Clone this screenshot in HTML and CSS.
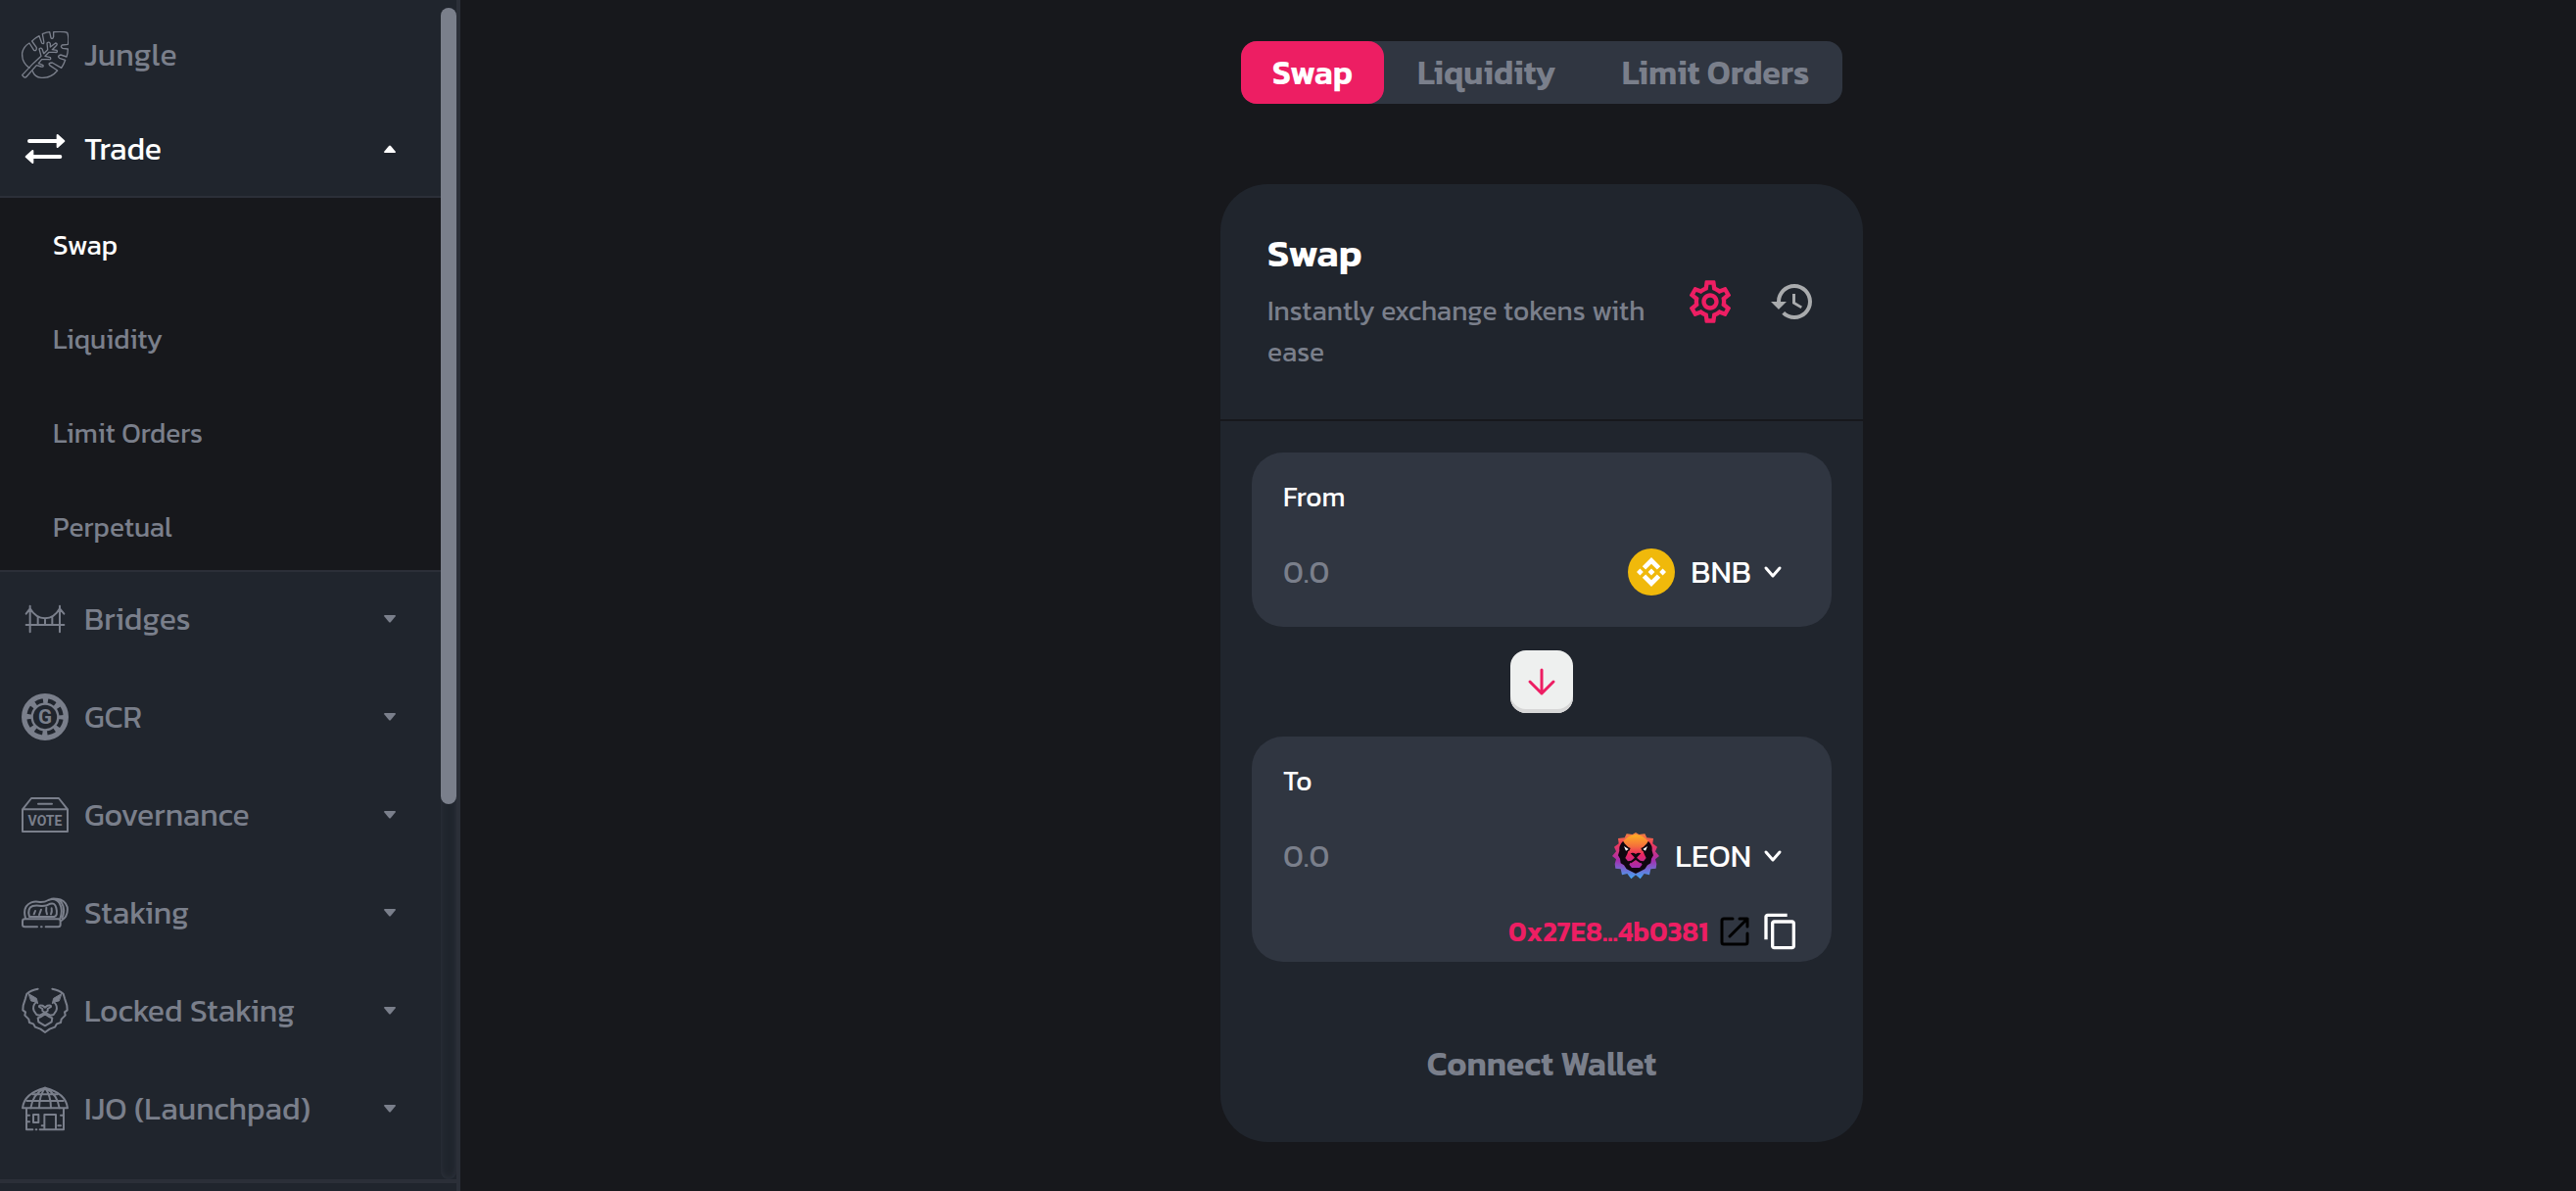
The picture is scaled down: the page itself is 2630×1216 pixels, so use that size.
FILE: index.html
```
<!DOCTYPE html>
<html lang="en">
<head>
  <meta charset="UTF-8">
  <meta name="viewport" content="width=device-width, initial-scale=1">
  <title>Swap</title>
  <link rel="stylesheet" href="styles.css">
</head>
<body>

<aside class="sidebar">
  <div class="sidebar-scroll">
    <nav class="menu">
      <a class="menu-item" href="#">
        <svg class="menu-icon thin" viewBox="0 0 144 144">
          <path d="M24 112Q0 96 2 66Q6 46 24 36L38 58Q46 62 46 50L32 30Q42 20 54 14L62 36Q70 42 68 30L64 8Q78 2 86 2L90 20Q96 26 98 16L98 2Q130 0 140 4Q146 20 142 40L124 42Q118 48 126 52L142 54Q142 66 138 78L120 72Q108 76 116 82L134 88Q130 100 122 112L94 96Q80 96 86 104L110 120Q90 144 60 142Q40 140 34 122"/>
          <path d="M36 98L60 76L54 54Q60 48 64 56L68 68L80 56L78 36Q84 30 88 38L88 48L104 36Q112 38 106 44L94 56L108 58Q112 66 102 64L84 64L72 76L88 80Q92 88 82 86L62 86L52 98L66 104Q68 110 60 108L46 104L16 138Q10 146 2 134Z"/>
        </svg>
        <span>Jungle</span>
      </a>
      <button class="menu-item active" type="button" aria-expanded="true">
        <svg class="menu-icon" viewBox="0 0 144 144">
          <path d="M24 48H110M118 96H34" stroke-width="12"/>
          <path class="solid" d="M110 30L130 48L110 66ZM34 78L14 96L34 114Z"/>
        </svg>
        <span>Trade</span>
        <svg class="caret up" viewBox="0 0 12 8"><path d="M0 1Q0 0 1 0H11Q12 0 12 1L7 7Q6 8 5 7Z"/></svg>
      </button>
      <div class="submenu">
        <a class="active" href="#">Swap</a>
        <a href="#">Liquidity</a>
        <a href="#">Limit Orders</a>
        <a href="#">Perpetual</a>
      </div>
      <div class="menu-group">
        <button class="menu-item" type="button">
          <svg class="menu-icon" viewBox="0 0 144 144">
            <path d="M26 32V112M117 32V112M14 90H130M14 56L26 40Q44 70 72 70Q100 70 117 40L130 56M50 66V90M72 70V90M94 66V90"/>
          </svg>
          <span>Bridges</span>
          <svg class="caret" viewBox="0 0 12 8"><path d="M0 1Q0 0 1 0H11Q12 0 12 1L7 7Q6 8 5 7Z"/></svg>
        </button>
        <button class="menu-item" type="button">
          <svg class="menu-icon" viewBox="0 0 144 144">
            <circle cx="72" cy="72" r="64" stroke-width="16"/>
            <circle cx="72" cy="72" r="40" stroke-width="7"/>
            <circle cx="72" cy="72" r="49" stroke-width="18" stroke-dasharray="15 23.48" stroke-dashoffset="7.5" stroke-linecap="butt"/>
            <text x="72" y="94" font-size="62">G</text>
          </svg>
          <span>GCR</span>
          <svg class="caret" viewBox="0 0 12 8"><path d="M0 1Q0 0 1 0H11Q12 0 12 1L7 7Q6 8 5 7Z"/></svg>
        </button>
        <button class="menu-item" type="button">
          <svg class="menu-icon" viewBox="0 0 144 144">
            <path d="M3 55L30 21H114L141 55V123H3V55H141M51 38H93"/>
            <text x="72" y="104" font-size="42">VOTE</text>
          </svg>
          <span>Governance</span>
          <svg class="caret" viewBox="0 0 12 8"><path d="M0 1Q0 0 1 0H11Q12 0 12 1L7 7Q6 8 5 7Z"/></svg>
        </button>
        <button class="menu-item" type="button">
          <svg class="menu-icon" viewBox="0 0 144 144">
            <path d="M48 115H10Q3 115 3 108V98Q3 91 10 91H112Q119 91 119 98V108Q119 115 112 115H74M60 115H62"/>
            <path d="M12 88Q2 52 30 40Q42 36 56 39Q70 40 82 33Q104 24 116 42Q128 62 118 90"/>
            <path d="M24 84Q16 58 34 51Q46 48 60 51Q76 52 88 44Q102 40 106 56Q112 80 100 84H24"/>
            <path d="M92 29Q110 26 122 40Q136 62 124 88M108 29Q132 30 140 54Q144 82 122 96"/>
            <path d="M42 66L38 76M60 62L54 78M76 56Q74 66 78 76M92 58Q94 68 90 76"/>
          </svg>
          <span>Staking</span>
          <svg class="caret" viewBox="0 0 12 8"><path d="M0 1Q0 0 1 0H11Q12 0 12 1L7 7Q6 8 5 7Z"/></svg>
        </button>
        <button class="menu-item" type="button">
          <svg class="menu-icon" viewBox="0 0 144 144">
            <path d="M50 5Q30 8 16 20L12 34L5 56L4 70L12 76L10 86L22 98L24 108L36 112L42 122L58 128L72 138L86 128L102 122L108 112L120 108L122 98L134 86L132 76L140 70L139 56L132 34L128 20Q114 8 94 5"/>
            <path class="solid" stroke-width="3" d="M22 20L46 34L50 50L40 44L30 42ZM122 20L98 34L94 50L104 44L114 42Z"/>
            <path d="M44 46Q32 58 38 72L46 84L56 86L72 78L88 86L98 84L106 72Q112 58 100 46"/>
            <path d="M72 62L64 56Q52 54 54 60L64 66V72L72 78L80 72V66L90 60Q92 54 80 56Z"/>
            <path d="M50 94L60 90L72 82L84 90L94 94L92 106L72 118L52 106Z"/>
          </svg>
          <span>Locked Staking</span>
          <svg class="caret" viewBox="0 0 12 8"><path d="M0 1Q0 0 1 0H11Q12 0 12 1L7 7Q6 8 5 7Z"/></svg>
        </button>
        <button class="menu-item" type="button">
          <svg class="menu-icon" viewBox="0 0 144 144">
            <path d="M3 70Q8 24 72 8Q136 24 141 70Z"/>
            <path d="M34 28H110M16 48H128M28 70Q34 28 72 8Q110 28 116 70M54 70Q54 32 72 8Q90 32 90 70"/>
            <path d="M15 72V136H34M44 136H46M56 136H129V72M70 136V90H105V136M36 90H52V114H36ZM16 92H24M16 112H24M120 92H128M120 124H112M62 124H70"/>
          </svg>
          <span>IJO (Launchpad)</span>
          <svg class="caret" viewBox="0 0 12 8"><path d="M0 1Q0 0 1 0H11Q12 0 12 1L7 7Q6 8 5 7Z"/></svg>
        </button>
      </div>
    </nav>
    <div class="scroll-track"><div class="scroll-thumb"></div></div>
  </div>
</aside>

<main class="content">
  <div class="tabs">
    <button class="tab active" type="button">Swap</button>
    <button class="tab" type="button">Liquidity</button>
    <button class="tab" type="button">Limit Orders</button>
  </div>

  <section class="card">
    <header class="card-header">
      <div class="card-heading">
        <h1>Swap</h1>
        <p>Instantly exchange tokens with ease</p>
      </div>
      <div class="card-actions">
        <button class="icon-btn settings" type="button" aria-label="Settings">
          <svg width="52" height="52" viewBox="0 0 24 24"><path d="M19.43 12.98c.04-.32.07-.64.07-.98 0-.34-.03-.66-.07-.98l2.11-1.65c.19-.15.24-.42.12-.64l-2-3.46c-.09-.16-.26-.25-.44-.25-.06 0-.12.01-.17.03l-2.49 1c-.52-.4-1.08-.73-1.69-.98l-.38-2.65C14.46 2.18 14.25 2 14 2h-4c-.25 0-.46.18-.49.42l-.38 2.65c-.61.25-1.17.59-1.69.98l-2.49-1c-.06-.02-.12-.03-.18-.03-.17 0-.34.09-.43.25l-2 3.46c-.13.22-.07.49.12.64l2.11 1.65c-.04.32-.07.65-.07.98 0 .33.03.66.07.98l-2.11 1.65c-.19.15-.24.42-.12.64l2 3.46c.09.16.26.25.44.25.06 0 .12-.01.17-.03l2.49-1c.52.4 1.08.73 1.69.98l.38 2.65c.03.24.24.42.49.42h4c.25 0 .46-.18.49-.42l.38-2.65c.61-.25 1.17-.59 1.69-.98l2.49 1c.06.02.12.03.18.03.17 0 .34-.09.43-.25l2-3.46c.12-.22.07-.49-.12-.64l-2.11-1.65zm-1.98-1.71c.04.31.05.52.05.73 0 .21-.02.43-.05.73l-.14 1.13.89.7 1.08.84-.7 1.21-1.27-.51-1.04-.42-.9.68c-.43.32-.84.56-1.25.73l-1.06.43-.16 1.13-.2 1.35h-1.4l-.19-1.35-.16-1.13-1.06-.43c-.43-.18-.83-.41-1.23-.71l-.91-.7-1.06.43-1.27.51-.7-1.21 1.08-.84.89-.7-.14-1.13c-.03-.31-.05-.54-.05-.74s.02-.43.05-.73l.14-1.13-.89-.7-1.08-.84.7-1.21 1.27.51 1.04.42.9-.68c.43-.32.84-.56 1.25-.73l1.06-.43.16-1.13.2-1.35h1.39l.19 1.35.16 1.13 1.06.43c.43.18.83.41 1.23.71l.91.7 1.06-.43 1.27-.51.7 1.21-1.07.85-.89.7.14 1.13zM12 8c-2.21 0-4 1.79-4 4s1.79 4 4 4 4-1.79 4-4-1.79-4-4-4zm0 6c-1.1 0-2-.9-2-2s.9-2 2-2 2 .9 2 2-.9 2-2 2z"/></svg>
        </button>
        <button class="icon-btn history" type="button" aria-label="History">
          <svg width="48" height="48" viewBox="0 0 24 24"><path d="M13 3c-4.97 0-9 4.03-9 9H1l3.89 3.89.07.14L9 12H6c0-3.87 3.13-7 7-7s7 3.13 7 7-3.13 7-7 7c-1.93 0-3.68-.79-4.94-2.06l-1.42 1.42C8.27 19.99 10.51 21 13 21c4.97 0 9-4.03 9-9s-4.03-9-9-9zm-1 5v5l4.28 2.54.72-1.21-3.5-2.08V8H12z"/></svg>
        </button>
      </div>
    </header>

    <div class="card-body">
      <div class="token-box">
        <label for="from">From</label>
        <div class="token-row">
          <input id="from" type="text" placeholder="0.0">
          <button class="token" type="button">
            <svg width="48" height="48" viewBox="0 0 32 32">
              <circle cx="16" cy="16" r="16" fill="#f0b90b"/>
              <path fill="#fff" d="M12.116 14.404L16 10.52l3.886 3.886 2.26-2.26L16 6l-6.144 6.144 2.26 2.26zM6 16l2.26-2.26L10.52 16l-2.26 2.26L6 16zm6.116 1.596L16 21.48l3.886-3.886 2.26 2.26L16 26l-6.147-6.147 2.263-2.257zM21.48 16l2.26-2.26L26 16l-2.26 2.26L21.48 16zm-3.188 0L16 18.294 13.706 16 16 13.706 18.292 16z"/>
            </svg>
            <span>BNB</span>
            <svg class="chevron" width="24" height="24" viewBox="0 0 24 24"><path d="M5 8l7 8 7-8"/></svg>
          </button>
        </div>
      </div>

      <button class="switch" type="button" aria-label="Switch tokens">
        <svg width="48" height="48" viewBox="0 0 48 48"><path d="M24 12v24M12 24l12 12 12-12"/></svg>
      </button>

      <div class="token-box with-address">
        <label for="to">To</label>
        <div class="token-row">
          <input id="to" type="text" placeholder="0.0">
          <button class="token" type="button">
            <svg width="48" height="48" viewBox="0 0 144 144">
              <defs>
                <linearGradient id="mane" x1="0" y1="0" x2="0" y2="1">
                  <stop offset="0" stop-color="#f58a3c"/>
                  <stop offset=".25" stop-color="#ee3a5c"/>
                  <stop offset=".6" stop-color="#a52fb0"/>
                  <stop offset="1" stop-color="#3fa9f5"/>
                </linearGradient>
                <linearGradient id="face" x1="0" y1="0" x2="0" y2="1">
                  <stop offset="0" stop-color="#fdb022"/>
                  <stop offset=".35" stop-color="#f5703c"/>
                  <stop offset=".6" stop-color="#ec2560"/>
                  <stop offset="1" stop-color="#a02cb4"/>
                </linearGradient>
              </defs>
              <path fill="url(#mane)" d="M72 0L82 6L100 4L106 16L126 18L124 34L138 44L132 58L144 72L132 82L136 96L134 110L118 112L114 130L98 126L86 142L72 130L58 142L46 126L30 130L26 112L10 110L8 96L12 82L0 72L12 58L6 44L20 34L18 18L38 16L44 4L62 6Z"/>
              <path fill="#10060f" d="M32 28Q20 40 22 56L18 70L24 80L26 94L36 100L44 112L72 126L100 112L108 100L118 94L120 80L126 70L122 56Q124 40 112 28Z"/>
              <path fill="url(#face)" d="M34 26Q50 8 72 6Q94 8 110 26L106 34L92 48L98 66L104 78L96 88L84 86L92 98L84 108H60L52 98L60 86L48 88L40 78L46 66L52 48L38 34Z"/>
              <path fill="#10060f" d="M56 64Q64 60 72 66Q80 60 88 64L76 76V78L90 90L86 94L72 84L58 94L54 90L68 78V76ZM34 38L56 48L52 56L42 58ZM110 38L88 48L92 56L102 58Z"/>
              <path fill="#fff" d="M36 42L50 51L42 56ZM108 42L94 51L102 56Z"/>
            </svg>
            <span>LEON</span>
            <svg class="chevron" width="24" height="24" viewBox="0 0 24 24"><path d="M5 8l7 8 7-8"/></svg>
          </button>
        </div>
        <div class="address-row">
          <a class="address" href="#">0x27E8...4b0381</a>
          <a class="external" href="#" aria-label="View on explorer">
            <svg width="30" height="30" viewBox="0 0 30 30"><path d="M13 2H4Q2 2 2 4V26Q2 28 4 28H26Q28 28 28 26V17M20 2H28V10M28 2L10 20"/></svg>
          </a>
          <button class="icon-btn copy" type="button" aria-label="Copy address">
            <svg width="40" height="40" viewBox="0 0 24 24"><path d="M16 1H4c-1.1 0-2 .9-2 2v14h2V3h12V1zm3 4H8c-1.1 0-2 .9-2 2v14c0 1.1.9 2 2 2h11c1.1 0 2-.9 2-2V7c0-1.1-.9-2-2-2zm0 16H8V7h11v14z"/></svg>
          </button>
        </div>
      </div>

      <button class="connect" type="button">Connect Wallet</button>
    </div>
  </section>
</main>

</body>
</html>
```

FILE: styles.css
```
* {
  box-sizing: border-box;
}

body {
  margin: 0;
  display: flex;
  min-height: 100vh;
  background: #17181c;
  color: #fff;
  font-family: Kanit, 'Noto Sans', sans-serif;
  font-size: 28px;
  line-height: 42px;
}

button {
  padding: 0;
  border: none;
  background: none;
  color: inherit;
  font: inherit;
  cursor: pointer;
}

a {
  color: inherit;
  text-decoration: none;
}

svg {
  display: block;
  flex: none;
}

/* sidebar */
.sidebar {
  flex: none;
  display: flex;
  flex-direction: column;
  width: 470px;
  height: 100vh;
  padding-bottom: 8px;
  background: #20252d;
  border-right: 4px solid #2b2f38;
}

.sidebar-scroll {
  flex: 1;
  display: flex;
  min-height: 0;
  border-bottom: 4px solid #2b2f38;
}

.menu {
  flex: 1;
  padding-top: 8px;
  overflow: hidden;
}

.menu-group {
  display: flex;
  flex-direction: column;
  gap: 4px;
}

.menu-item {
  display: flex;
  align-items: center;
  gap: 16px;
  width: 100%;
  height: 96px;
  padding: 0 46px 0 22px;
  color: #7a7f8b;
  font-size: 32px;
}

.menu-item.active,
.submenu .active {
  color: #fff;
}

.menu-icon {
  width: 48px;
  height: 48px;
  fill: none;
  stroke: currentColor;
  stroke-width: 6;
  stroke-linecap: round;
  stroke-linejoin: round;
}

.menu-icon.thin {
  stroke-width: 4;
}

.menu-icon .solid {
  fill: currentColor;
}

.menu-icon text {
  fill: currentColor;
  stroke: none;
  font-family: Roboto, sans-serif;
  font-weight: 700;
  text-anchor: middle;
}

.caret {
  width: 12px;
  height: 8px;
  margin-left: auto;
  fill: currentColor;
}

.caret.up {
  transform: rotate(180deg);
}

.submenu {
  background: #17181c;
  box-shadow: inset 0 2px #2b2f38, inset 0 -2px #2b2f38;
}

.submenu a {
  display: flex;
  align-items: center;
  height: 96px;
  padding: 4px 54px 0;
  color: #7a7f8b;
}

.scroll-track {
  width: 16px;
  margin-top: 8px;
  border-radius: 8px;
  background: #20252d;
  box-shadow: inset 0 0 6px #2f343e;
}

.scroll-thumb {
  height: 68%;
  border-radius: 8px;
  background: #7a7f8b;
}

/* swap page */
.content {
  flex: 1;
  display: flex;
  flex-direction: column;
  align-items: center;
  gap: 82px;
  padding: 42px 0 48px 48px;
}

.tabs {
  display: flex;
  width: 614px;
  height: 64px;
  border-radius: 16px;
  background: #303641;
}

.tab {
  flex: 1 0 auto;
  padding: 0 32px;
  border-radius: 16px;
  color: #7a7f8b;
  font-size: 34px;
  font-weight: 600;
}

.tab.active {
  flex: none;
  background: #ed1e63;
  color: #fff;
}

.card {
  width: 656px;
  border-radius: 48px;
  background: #20252d;
}

.card-header {
  display: flex;
  align-items: center;
  justify-content: space-between;
  padding: 48px;
}

.card-heading {
  flex: 1;
}

h1 {
  margin: 0 0 16px;
  font-size: 40px;
  font-weight: 600;
  line-height: 44px;
}

.card-heading p {
  margin: 0;
  color: #7a7f8b;
}

.card-actions {
  display: flex;
  align-items: center;
  gap: 34px;
}

.icon-btn svg {
  fill: currentColor;
}

.settings {
  color: #ed1e63;
}

.history {
  color: #a9abad;
}

.card-body {
  display: flex;
  flex-direction: column;
  gap: 24px;
  padding: 32px 32px 48px;
  border-top: 2px solid #17181c;
}

.token-box {
  display: flex;
  flex-direction: column;
  gap: 32px;
  padding: 24px 32px 32px;
  border-radius: 32px;
  background: #303641;
}

.token-box.with-address {
  padding-bottom: 10px;
}

.token-row {
  display: flex;
  align-items: center;
  height: 48px;
  padding-right: 16px;
}

.token-row input {
  flex: 1;
  min-width: 0;
  padding: 0;
  border: none;
  outline: none;
  background: none;
  color: #fff;
  font: inherit;
  font-size: 32px;
}

.token-row input::placeholder {
  color: #7a7f8b;
}

.token {
  display: flex;
  align-items: center;
  font-size: 32px;
}

.token span {
  margin: 0 10px 0 16px;
}

.chevron {
  fill: none;
  stroke: #fff;
  stroke-width: 3;
  stroke-linecap: round;
  stroke-linejoin: round;
}

.switch {
  align-self: center;
  display: flex;
  align-items: center;
  justify-content: center;
  width: 64px;
  height: 64px;
  border-radius: 16px;
  background: #eef0ef;
  box-shadow: inset 0 -4px #d7d7d7;
}

.switch svg {
  fill: none;
  stroke: #ed1e63;
  stroke-width: 3;
  stroke-linecap: round;
  stroke-linejoin: round;
}

.address-row {
  display: flex;
  align-items: center;
  justify-content: flex-end;
  gap: 12px;
}

.address {
  color: #ed1e63;
  font-weight: 600;
}

.external svg {
  fill: none;
  stroke: #000;
  stroke-width: 3;
  stroke-linecap: round;
  stroke-linejoin: round;
}

.connect {
  height: 64px;
  margin-top: 48px;
  color: #7a7f8b;
  font-size: 34px;
  font-weight: 600;
}
```
